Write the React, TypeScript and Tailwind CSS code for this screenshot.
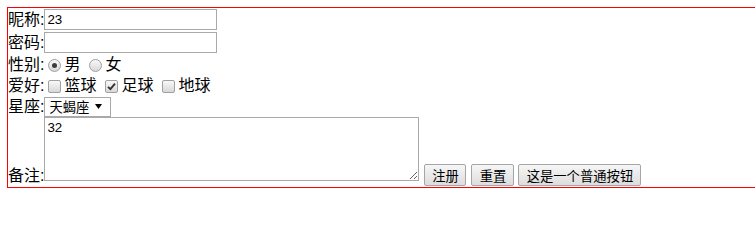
import React from "react";

function Radio({ checked }: { checked?: boolean }) {
  return (
    <span className="flex items-center justify-center w-[13px] h-[13px] rounded-full border border-[#a0a0a0] bg-linear-to-b from-[#f8f8f8] to-[#d8d8d8] shrink-0">
      {checked ? <span className="w-[5px] h-[5px] rounded-full bg-[#3c3c3c]" /> : null}
    </span>
  );
}

function Checkbox({ checked }: { checked?: boolean }) {
  return (
    <span className="flex items-center justify-center w-[13px] h-[13px] rounded-[2px] border border-[#a0a0a0] bg-linear-to-b from-[#f8f8f8] to-[#d8d8d8] shrink-0">
      {checked ? (
        <svg width="9" height="9" viewBox="0 0 9 9">
          <path d="M1 4.8 L3.4 7.2 L8 1.6" fill="none" stroke="#333" strokeWidth="1.9" />
        </svg>
      ) : null}
    </span>
  );
}

export default function App() {
  return (
    <div className="w-[755px] h-[207px] overflow-hidden bg-white text-black font-['Liberation_Sans','Noto_Sans_CJK_SC',sans-serif] text-[16px] leading-[20px]">
      <form className="mt-[7px] ml-[7px] w-[800px] border border-solid border-[color:#ff0000] flex flex-col">
        <div className="flex items-center h-[23px]">
          <span>昵称:</span>
          <input
            type="text"
            defaultValue="23"
            className="w-[173px] h-[21px] border border-[#a9a9a9] px-[2px] text-[13.33px] leading-[normal] outline-none bg-white"
          />
        </div>
        <div className="flex items-center h-[23px]">
          <span>密码:</span>
          <input
            type="password"
            className="w-[173px] h-[21px] border border-[#a9a9a9] px-[2px] text-[13.33px] leading-[normal] outline-none bg-white"
          />
        </div>
        <div className="flex items-center h-[22px]">
          <span>性别:</span>
          <span className="ml-[4px] mr-[3px] flex">
            <Radio checked />
          </span>
          <span>男</span>
          <span className="ml-[9px] mr-[3px] flex">
            <Radio />
          </span>
          <span>女</span>
        </div>
        <div className="flex items-center h-[20px]">
          <span>爱好:</span>
          <span className="ml-[4px] mr-[3px] flex">
            <Checkbox />
          </span>
          <span>篮球</span>
          <span className="ml-[9px] mr-[3px] flex">
            <Checkbox checked />
          </span>
          <span>足球</span>
          <span className="ml-[9px] mr-[3px] flex">
            <Checkbox />
          </span>
          <span>地球</span>
        </div>
        <div className="flex items-center h-[21px]">
          <span>星座:</span>
          <div className="flex items-center w-[67px] h-[20px] border border-[#a9a9a9] bg-white pl-[4px] text-[13.33px] leading-[normal]">
            <span>天蝎座</span>
            <svg className="ml-auto mr-[8px]" width="7" height="5" viewBox="0 0 7 5">
              <path d="M0 0 H7 L3.5 5 Z" fill="#000" />
            </svg>
          </div>
        </div>
        <div className="flex items-end h-[70px]">
          <span className="mb-[1px]">备注:</span>
          <textarea
            defaultValue="32"
            className="w-[375px] h-[64px] mb-[6px] border border-[#a9a9a9] p-[2px] text-[13.33px] leading-[normal] resize outline-none bg-white"
          />
          <button
            type="button"
            className="flex items-center justify-center h-[22px] w-[42px] ml-[5px] mb-[1px] border border-[#a6a6a6] rounded-[2px] bg-linear-to-b from-[#f6f6f6] to-[#dddddd] text-[13.33px] leading-[normal]"
          >
            注册
          </button>
          <button
            type="reset"
            className="flex items-center justify-center h-[22px] w-[43px] ml-[5px] mb-[1px] border border-[#a6a6a6] rounded-[2px] bg-linear-to-b from-[#f6f6f6] to-[#dddddd] text-[13.33px] leading-[normal]"
          >
            重置
          </button>
          <button
            type="button"
            className="flex items-center justify-center h-[22px] w-[123px] ml-[4px] mb-[1px] border border-[#a6a6a6] rounded-[2px] bg-linear-to-b from-[#f6f6f6] to-[#dddddd] text-[13.33px] leading-[normal]"
          >
            这是一个普通按钮
          </button>
        </div>
      </form>
    </div>
  );
}
